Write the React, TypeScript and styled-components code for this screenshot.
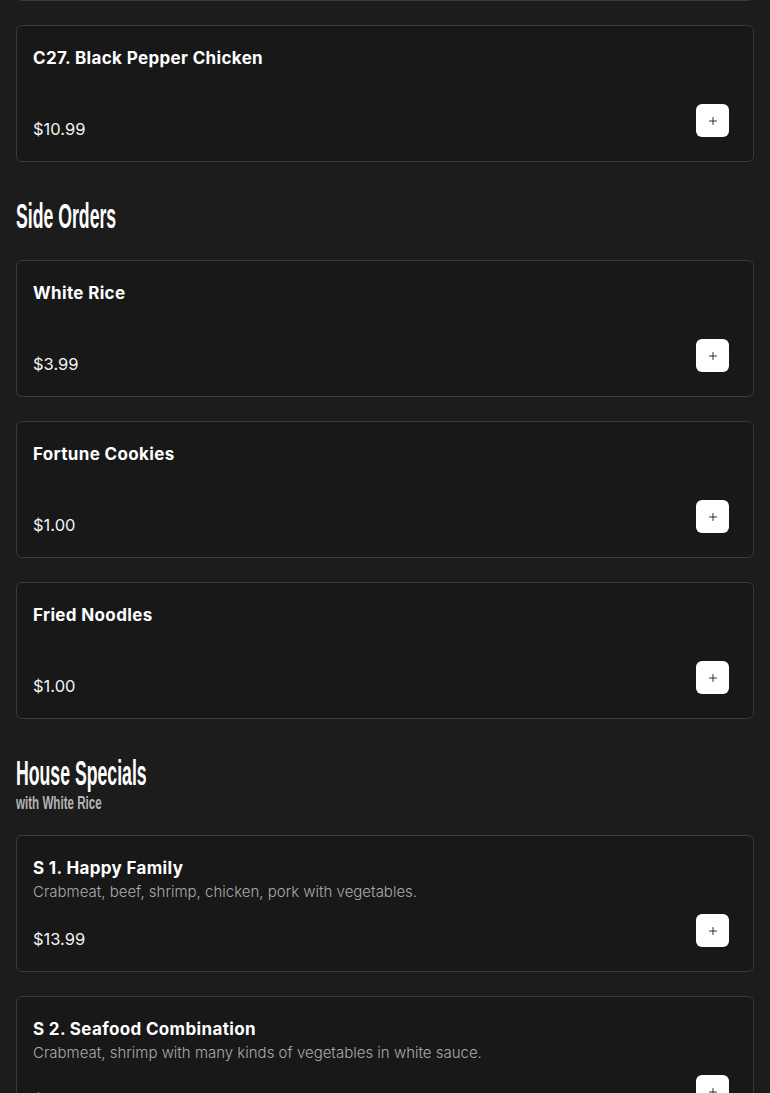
import React, { FC } from 'react';
import styled, { createGlobalStyle } from 'styled-components';
import { Plus } from 'lucide-react';

const GlobalStyle = createGlobalStyle`
  html, body {
    margin: 0;
    padding: 0;
    background: #1c1c1c;
  }
  body {
    font-family: Inter, "Noto Sans", sans-serif;
    color: #fff;
  }
`;

type Item = { name: string; desc?: string; price: string };
type Section = { title: string; sub?: string; items: Item[] };

const sections: Section[] = [
  {
    title: 'Side Orders',
    items: [
      { name: 'White Rice', price: '$3.99' },
      { name: 'Fortune Cookies', price: '$1.00' },
      { name: 'Fried Noodles', price: '$1.00' },
    ],
  },
  {
    title: 'House Specials',
    sub: 'with White Rice',
    items: [
      { name: 'S 1. Happy Family', desc: 'Crabmeat, beef, shrimp, chicken, pork with vegetables.', price: '$13.99' },
      { name: 'S 2. Seafood Combination', desc: 'Crabmeat, shrimp with many kinds of vegetables in white sauce.', price: '$14.99' },
    ],
  },
];

const ItemCard: FC<{ item: Item }> = ({ item }) => (
  <Card>
    <Name>{item.name}</Name>
    {item.desc && <Desc>{item.desc}</Desc>}
    <Bottom>
      <Price>{item.price}</Price>
      <AddButton aria-label="Add">
        <Plus size={12} strokeWidth={1.8} />
      </AddButton>
    </Bottom>
  </Card>
);

export default function App() {
  return (
    <>
      <GlobalStyle />
      <Page>
        <List>
          {/* previous card, scrolled out of view: only its bottom edge shows */}
          <Card aria-hidden />
          <ItemCard item={{ name: 'C27. Black Pepper Chicken', price: '$10.99' }} />
        </List>
        {sections.map((s) => (
          <div key={s.title}>
            <Header>
              <Heading>
                <span>{s.title}</span>
              </Heading>
              {s.sub && (
                <Sub>
                  <span>{s.sub}</span>
                </Sub>
              )}
            </Header>
            <List>
              {s.items.map((it) => (
                <ItemCard key={it.name} item={it} />
              ))}
            </List>
          </div>
        ))}
      </Page>
    </>
  );
}

const Page = styled.main`
  padding: 0 16px;
  margin-top: -136px;
`;

const List = styled.div`
  display: flex;
  flex-direction: column;
  gap: 24px;
`;

const Header = styled.div`
  margin: 36px 0 26px;
`;

const Heading = styled.h2`
  margin: 0 0 3px;
  height: 36px;
  line-height: 36px;
  font-family: "Liberation Sans", Arial, sans-serif;
  font-weight: 700;
  font-size: 35px;
  color: #fff;
  white-space: nowrap;
  > span {
    display: inline-block;
    transform: scaleX(0.505);
    transform-origin: left center;
  }
`;

const Sub = styled.div`
  height: 18px;
  line-height: 18px;
  margin-bottom: -3px;
  font-family: "Liberation Sans", Arial, sans-serif;
  font-weight: 700;
  font-size: 19px;
  color: #b5b5b5;
  white-space: nowrap;
  > span {
    display: inline-block;
    transform: scaleX(0.61);
    transform-origin: left center;
  }
`;

const Card = styled.div`
  box-sizing: border-box;
  min-height: 137px;
  display: flex;
  flex-direction: column;
  padding: 20px 24px 24px 16px;
  background: #181818;
  border: 1px solid #3a3a3a;
  border-radius: 6px;
`;

const Name = styled.div`
  font-size: 17px;
  line-height: 24px;
  font-weight: 700;
  letter-spacing: 0.35px;
  color: #fff;
`;

const Desc = styled.div`
  font-size: 15px;
  line-height: 24px;
  font-weight: 300;
  color: #aaaaaa;
`;

const Bottom = styled.div`
  margin-top: auto;
  display: flex;
  align-items: flex-end;
  justify-content: space-between;
`;

const Price = styled.div`
  font-size: 16.5px;
  line-height: 18px;
  font-weight: 400;
  margin-bottom: -1px;
  color: #f2f2f2;
`;

const AddButton = styled.button`
  width: 33px;
  height: 33px;
  padding: 0;
  border: none;
  border-radius: 6px;
  background: #fff;
  color: #1a1a1a;
  display: flex;
  align-items: center;
  justify-content: center;
  cursor: pointer;
`;
